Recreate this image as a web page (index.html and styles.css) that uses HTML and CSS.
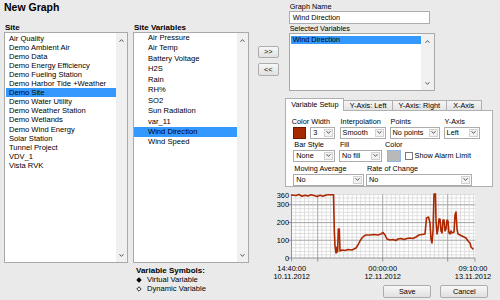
FILE: index.html
```html
<!DOCTYPE html>
<html lang="en">
<head>
    <meta charset="UTF-8">
    <meta name="viewport" content="width=device-width, initial-scale=1.0">
    <link rel="stylesheet" href="styles.css">
    <title>New Graph</title>
</head>
<body>
    <div class="dialog">
        <div class="left-side">
            <h1 class="title">New Graph</h1>
            <div class="lists">
                <div class="site-col">
                    <div class="group-label">Site</div>
                    <div class="listbox site-list">
                        <ul class="items">
                            <li>Air Quality</li>
                            <li>Demo Ambient Air</li>
                            <li>Demo Data</li>
                            <li>Demo Energy Efficiency</li>
                            <li>Demo Fueling Station</li>
                            <li>Demo Harbor Tide +Weather</li>
                            <li class="selected">Demo Site</li>
                            <li>Demo Water Utility</li>
                            <li>Demo Weather Station</li>
                            <li>Demo Wetlands</li>
                            <li>Demo Wind Energy</li>
                            <li>Solar Station</li>
                            <li>Tunnel Project</li>
                            <li>VDV_1</li>
                            <li>Vista RVK</li>
                        </ul>
                        <div class="scrollbar">
                            <svg class="chev" width="5" height="3" viewBox="0 0 5 3"><path d="M0.5 2.8L2.5 0.6L4.5 2.8" /></svg>
                            <svg class="chev" width="5" height="3" viewBox="0 0 5 3"><path d="M0.5 0.2L2.5 2.4L4.5 0.2" /></svg>
                        </div>
                    </div>
                </div>
                <div class="vars-col">
                    <div class="group-label">Site Variables</div>
                    <div class="listbox vars-list">
                        <ul class="items">
                            <li>Air Pressure</li>
                            <li>Air Temp</li>
                            <li>Battery Voltage</li>
                            <li>H2S</li>
                            <li>Rain</li>
                            <li>RH%</li>
                            <li>SO2</li>
                            <li>Sun Radiation</li>
                            <li>var_11</li>
                            <li class="selected">Wind Direction</li>
                            <li>Wind Speed</li>
                        </ul>
                        <div class="scrollbar">
                            <svg class="chev" width="5" height="3" viewBox="0 0 5 3"><path d="M0.5 2.8L2.5 0.6L4.5 2.8" /></svg>
                            <svg class="chev" width="5" height="3" viewBox="0 0 5 3"><path d="M0.5 0.2L2.5 2.4L4.5 0.2" /></svg>
                        </div>
                    </div>
                    <div class="symbols">
                        <div class="symbols-title">Variable Symbols:</div>
                        <div class="symbol-row">
                            <svg class="diamond" width="6" height="6" viewBox="0 0 6 6"><path d="M3 0.3L5.7 3L3 5.7L0.3 3Z" fill="#000" /></svg>
                            Virtual Variable
                        </div>
                        <div class="symbol-row">
                            <svg class="diamond" width="6" height="6" viewBox="0 0 6 6"><path d="M3 0.8L5.2 3L3 5.2L0.8 3Z" fill="none" stroke="#000" stroke-width="0.8" /></svg>
                            Dynamic Variable
                        </div>
                    </div>
                </div>
            </div>
        </div>

        <div class="right-side">
            <div class="top-row">
                <div class="move-buttons">
                    <button class="btn move">&gt;&gt;</button>
                    <button class="btn move">&lt;&lt;</button>
                </div>
                <div class="fields">
                    <div class="field-label">Graph Name</div>
                    <div class="textbox">Wind Direction</div>
                    <div class="field-label">Selected Variables</div>
                    <div class="listbox selected-list">
                        <ul class="items">
                            <li class="selected">Wind Direction</li>
                        </ul>
                        <div class="scrollbar">
                            <svg class="chev" width="5" height="3" viewBox="0 0 5 3"><path d="M0.5 2.8L2.5 0.6L4.5 2.8" /></svg>
                            <svg class="chev" width="5" height="3" viewBox="0 0 5 3"><path d="M0.5 0.2L2.5 2.4L4.5 0.2" /></svg>
                        </div>
                    </div>
                </div>
            </div>

            <div class="tabs">
                <div class="tab-strip">
                    <span class="tab active tab-setup">Variable Setup</span>
                    <span class="tab tab-left">Y-Axis: Left</span>
                    <span class="tab tab-right">Y-Axis: Right</span>
                    <span class="tab tab-x">X-Axis</span>
                </div>
                <div class="tab-panel">
                    <div class="form-row">
                        <div class="field f-color">
                            <span class="lbl lbl-flush">Color</span>
                            <span class="swatch red"></span>
                        </div>
                        <div class="field f-width">
                            <span class="lbl">Width</span>
                            <div class="select w-width"><span class="value">3</span><span class="dd"><svg width="5" height="3" viewBox="0 0 5 3"><path d="M0.5 0.2L2.5 2.4L4.5 0.2" /></svg></span></div>
                        </div>
                        <div class="field f-interp">
                            <span class="lbl">Interpolation</span>
                            <div class="select w-interp"><span class="value">Smooth</span><span class="dd"><svg width="5" height="3" viewBox="0 0 5 3"><path d="M0.5 0.2L2.5 2.4L4.5 0.2" /></svg></span></div>
                        </div>
                        <div class="field f-points">
                            <span class="lbl">Points</span>
                            <div class="select w-points"><span class="value">No points</span><span class="dd"><svg width="5" height="3" viewBox="0 0 5 3"><path d="M0.5 0.2L2.5 2.4L4.5 0.2" /></svg></span></div>
                        </div>
                        <div class="field f-yaxis">
                            <span class="lbl">Y-Axis</span>
                            <div class="select w-yaxis"><span class="value">Left</span><span class="dd"><svg width="5" height="3" viewBox="0 0 5 3"><path d="M0.5 0.2L2.5 2.4L4.5 0.2" /></svg></span></div>
                        </div>
                    </div>
                    <div class="form-row row-2">
                        <div class="field f-bar">
                            <span class="lbl">Bar Style</span>
                            <div class="select w-bar"><span class="value">None</span><span class="dd"><svg width="5" height="3" viewBox="0 0 5 3"><path d="M0.5 0.2L2.5 2.4L4.5 0.2" /></svg></span></div>
                        </div>
                        <div class="field f-fill">
                            <span class="lbl">Fill</span>
                            <div class="select w-fill"><span class="value">No fill</span><span class="dd"><svg width="5" height="3" viewBox="0 0 5 3"><path d="M0.5 0.2L2.5 2.4L4.5 0.2" /></svg></span></div>
                        </div>
                        <div class="field f-fillcolor">
                            <span class="lbl lbl-flush">Color</span>
                            <span class="swatch gray"></span>
                        </div>
                        <label class="check">
                            <span class="box"></span>
                            Show Alarm Limit
                        </label>
                    </div>
                    <div class="form-row row-3">
                        <div class="field f-avg">
                            <span class="lbl">Moving Average</span>
                            <div class="select w-avg"><span class="value">No</span><span class="dd"><svg width="5" height="3" viewBox="0 0 5 3"><path d="M0.5 0.2L2.5 2.4L4.5 0.2" /></svg></span></div>
                        </div>
                        <div class="field f-rate">
                            <span class="lbl">Rate of Change</span>
                            <div class="select w-rate"><span class="value">No</span><span class="dd"><svg width="5" height="3" viewBox="0 0 5 3"><path d="M0.5 0.2L2.5 2.4L4.5 0.2" /></svg></span></div>
                        </div>
                    </div>
                </div>
            </div>

            <svg class="chart" width="230" height="95" viewBox="262 188 230 95">
                <defs>
                    <pattern id="minor-grid" patternUnits="userSpaceOnUse" x="291" y="193" width="4.333" height="3.556">
                        <path d="M0 0.5H4.333M0.5 0V3.556" stroke="#d6d6d6" stroke-width="0.8" fill="none" />
                    </pattern>
                </defs>
                <rect x="291" y="193" width="184" height="64" fill="#fff" />
                <rect x="291" y="193" width="184" height="64" fill="url(#minor-grid)" />
                <!-- major grid -->
                <path d="M291 203.7H475M291 221.5H475M291 239.2H475M317.7 193V257M382.7 193V257M447.7 193V257" stroke="#a8a8a8" stroke-width="0.9" fill="none" />
                <!-- axes and ticks -->
                <path d="M291.5 193V260.5M288 257H475M288 239.2H291M288 221.5H291M288 203.7H291M317.7 257V260.5M382.7 257V260.5M447.7 257V260.5M475 257V260.5" stroke="#8a8a8a" stroke-width="0.9" fill="none" />
                <polyline class="series" points="291,194 296,194.5 299,193.5 302,195.3 305,194.2 308,195 311,193.8 314,194.5 317,195.6 320,194.2 323,195.2 326,194 329,193.7 333.5,193.8 334.3,230 335,245 336,252 337,246 337.6,251 338.3,228 339.3,228 340,250 342,249 345,249.5 348,248.5 352,249 356,247 358,244 360,240 362,237 364,235 366,234 370,234 374,233.5 378,234 381,233 383,231.5 385,234 387,238 390,239 393,238.5 396,239.5 398,238 401,237.5 404,238.5 407,237.5 410,237 413,237.5 416,236 419,234 422,233.5 425,233 426.5,217 428.5,216 430,222 431,238 432,242 433,230 434,193 435.5,193 436,220 437,233 438,228 439,218 440,218 441,230 442,232 443,219 444,219 445,230 446,228 447,219 448,220 449,232 450,233 451,230 452,232 454,231 455,214 456,211 457,228 458,233 460,234 462,235 464,236 466,237 468,240 470,242 471,246 472,247 473.5,248.5" />
                <g class="y-labels">
                    <text x="289" y="196.6">360</text>
                    <text x="289" y="206.3">300</text>
                    <text x="289" y="224.1">200</text>
                    <text x="289" y="241.8">100</text>
                    <text x="289" y="259.6">0</text>
                </g>
                <g class="x-labels">
                    <text x="291.7" y="269.5">14:40:00</text>
                    <text x="291.7" y="278.2">10.11.2012</text>
                    <text x="382.7" y="269.5">00:00:00</text>
                    <text x="382.7" y="278.2">12.11.2012</text>
                    <text x="473" y="269.5">09:10:00</text>
                    <text x="473" y="278.2">13.11.2012</text>
                </g>
            </svg>

            <div class="dialog-buttons">
                <button class="btn action">Save</button>
                <button class="btn action">Cancel</button>
            </div>
        </div>
    </div>
</body>
</html>
```

FILE: styles.css
```css
* {
    box-sizing: border-box;
}

html,
body {
    margin: 0;
    height: 100%;
}

body {
    font-family: "Liberation Sans", Arial, sans-serif;
    font-size: 7.3px;
    color: #000;
    background-color: #eaeaea;
    background-image: conic-gradient(#e6e6e6 25%, #eeeeee 0 50%, #e6e6e6 0 75%, #eeeeee 0);
    background-size: 2px 2px;
    overflow: hidden;
}

.dialog {
    display: flex;
    width: 500px;
    height: 300px;
}

/* ---------- left side: site + variable lists ---------- */

.left-side {
    width: 245px;
    margin-left: 4px;
}

.title {
    margin: 0;
    padding-top: 1px;
    font-size: 10.5px;
    line-height: 13px;
    font-weight: bold;
}

.lists {
    display: flex;
    margin-top: 9px;
}

.site-col {
    width: 124px;
}

.vars-col {
    width: 116px;
    margin-left: 5px;
}

.group-label {
    font-size: 8px;
    font-weight: bold;
    line-height: 9px;
    padding-left: 1px;
}

.listbox {
    display: flex;
    background: #fff;
    border: 1px solid #a9a9a9;
}

.site-list,
.vars-list {
    height: 231px;
}

.items {
    flex: 1;
    list-style: none;
    margin: 0;
    padding: 0;
}

.items li {
    white-space: nowrap;
}

.items li.selected {
    background: #3399ff;
}

.site-list .items {
    padding: 0.5px 0 0 1px;
}

.site-list li {
    height: 9.12px;
    line-height: 9.12px;
    padding-left: 3px;
    font-size: 7.6px;
}

.vars-list li {
    height: 10.44px;
    line-height: 10.44px;
    padding-left: 14px;
    font-size: 7.6px;
}

.scrollbar {
    width: 11px;
    flex-shrink: 0;
    background: #f0f0f0;
    display: flex;
    flex-direction: column;
    justify-content: space-between;
    align-items: center;
    padding: 6px 0 5px;
}

.chev path,
.dd path {
    fill: none;
    stroke: #4a4a4a;
    stroke-width: 0.9;
}

.symbols {
    margin-top: 3px;
    padding-left: 3px;
}

.symbols-title {
    font-size: 8px;
    font-weight: bold;
    line-height: 9px;
}

.symbol-row {
    display: flex;
    align-items: center;
    height: 9px;
    font-size: 7.6px;
}

.diamond {
    margin-right: 5px;
}

/* ---------- right side ---------- */

.right-side {
    width: 247px;
    margin-left: 4px;
    padding-top: 3px;
}

.top-row {
    display: flex;
}

.move-buttons {
    display: flex;
    flex-direction: column;
    gap: 5px;
    margin-top: 42.7px;
    margin-left: 4.7px;
}

.btn {
    font-family: inherit;
    font-size: 7.3px;
    color: #000;
    padding: 0;
    background: linear-gradient(to bottom, #f7f7f7, #e0e0e0);
    border: 1px solid #adadad;
    border-radius: 2px;
}

.btn.move {
    width: 21.3px;
    height: 12.8px;
    line-height: 10px;
}

.fields {
    width: 146px;
    margin-left: 9.7px;
}

.field-label {
    line-height: 8px;
    padding-left: 1px;
}

.textbox {
    width: 141px;
    height: 13px;
    line-height: 11px;
    padding-left: 3px;
    background: #fff;
    border: 1px solid #abadb3;
    margin-bottom: 1px;
}

.selected-list {
    height: 58px;
}

.selected-list .items {
    padding: 2px 0 0 1px;
}

.selected-list li {
    height: 8px;
    line-height: 8px;
    padding-left: 2px;
}

.selected-list .scrollbar {
    width: 13px;
    padding: 6px 0 5px;
}

/* tab control */

.tabs {
    margin-top: 6.3px;
    margin-left: 32.3px;
    width: 208px;
}

.tab-strip {
    display: flex;
    align-items: flex-end;
    height: 12.7px;
}

.tab {
    height: 10px;
    line-height: 9px;
    text-align: center;
    background: linear-gradient(to bottom, #f5f5f5, #e4e4e4);
    border: 1px solid #b0b0b0;
    border-bottom: none;
    margin-left: -1px;
}

.tab.active {
    height: 12.7px;
    line-height: 11px;
    background: #fff;
    margin-left: 0;
    margin-bottom: -1px;
    position: relative;
    z-index: 1;
}

.tab-setup {
    width: 59px;
}

.tab-left {
    width: 49.7px;
}

.tab-right {
    width: 54.7px;
}

.tab-x {
    width: 36px;
}

.tab-panel {
    background: #fff;
    border: 1px solid #b0b0b0;
    height: 77px;
    padding: 7px 0 0 7px;
}

.form-row {
    display: flex;
    align-items: flex-end;
}

.row-2 {
    margin-top: 2px;
}

.row-3 {
    margin-top: 3px;
}

.field {
    display: flex;
    flex-direction: column;
    flex-shrink: 0;
}

.lbl {
    line-height: 8px;
    margin-bottom: 1px;
    padding-left: 1px;
    white-space: nowrap;
}

.lbl-flush {
    padding-left: 0;
    margin-left: -1.5px;
}

.swatch {
    display: block;
    height: 12px;
}

.swatch.red {
    width: 13px;
    background: #a82800;
    border: 1px solid #6b1a00;
}

.swatch.gray {
    width: 14px;
    background: #b9b9b9;
    border: 1px solid #8fb8e6;
}

.select {
    display: flex;
    height: 12px;
    background: #fff;
    border: 1px solid #acacac;
}

.select .value {
    flex: 1;
    line-height: 10px;
    padding-left: 2px;
    white-space: nowrap;
    overflow: hidden;
}

.select .dd {
    width: 9px;
    margin: 1px;
    background: #f2f2f2;
    border: 1px solid #d2d2d2;
    display: flex;
    align-items: center;
    justify-content: center;
}

.f-color {
    width: 17px;
}

.f-width {
    width: 29.3px;
}

.w-width {
    width: 24.3px;
}

.f-interp {
    width: 50px;
}

.w-interp {
    width: 46.4px;
}

.f-points {
    width: 54px;
}

.w-points {
    width: 50.7px;
}

.f-yaxis {
    width: 37px;
}

.w-yaxis {
    width: 36px;
}

.f-bar {
    width: 45.6px;
}

.w-bar {
    width: 41.6px;
}

.f-fill {
    width: 47.7px;
}

.w-fill {
    width: 43.4px;
}

.f-fillcolor {
    width: 18px;
}

.check {
    display: flex;
    align-items: center;
    height: 12px;
    white-space: nowrap;
}

.check .box {
    width: 8px;
    height: 8px;
    margin-right: 2px;
    background: #fff;
    border: 1px solid #7a7a7a;
}

.f-avg {
    width: 72.7px;
}

.w-avg {
    width: 70.4px;
}

.f-rate {
    width: 106px;
}

.w-rate {
    width: 105.7px;
}

/* chart */

.chart {
    display: block;
    margin-top: 2px;
    margin-left: 9px;
}

.series {
    fill: none;
    stroke: #ad2700;
    stroke-width: 1.6;
    stroke-linejoin: round;
}

.chart text {
    font-family: "Liberation Sans", Arial, sans-serif;
    font-size: 7.4px;
    fill: #000;
}

.y-labels text {
    text-anchor: end;
}

.x-labels text {
    text-anchor: middle;
}

/* bottom buttons */

.dialog-buttons {
    display: flex;
    justify-content: flex-end;
    gap: 9px;
    margin-top: 1px;
    padding-right: 11.7px;
}

.btn.action {
    width: 48px;
    height: 13.4px;
}
```
